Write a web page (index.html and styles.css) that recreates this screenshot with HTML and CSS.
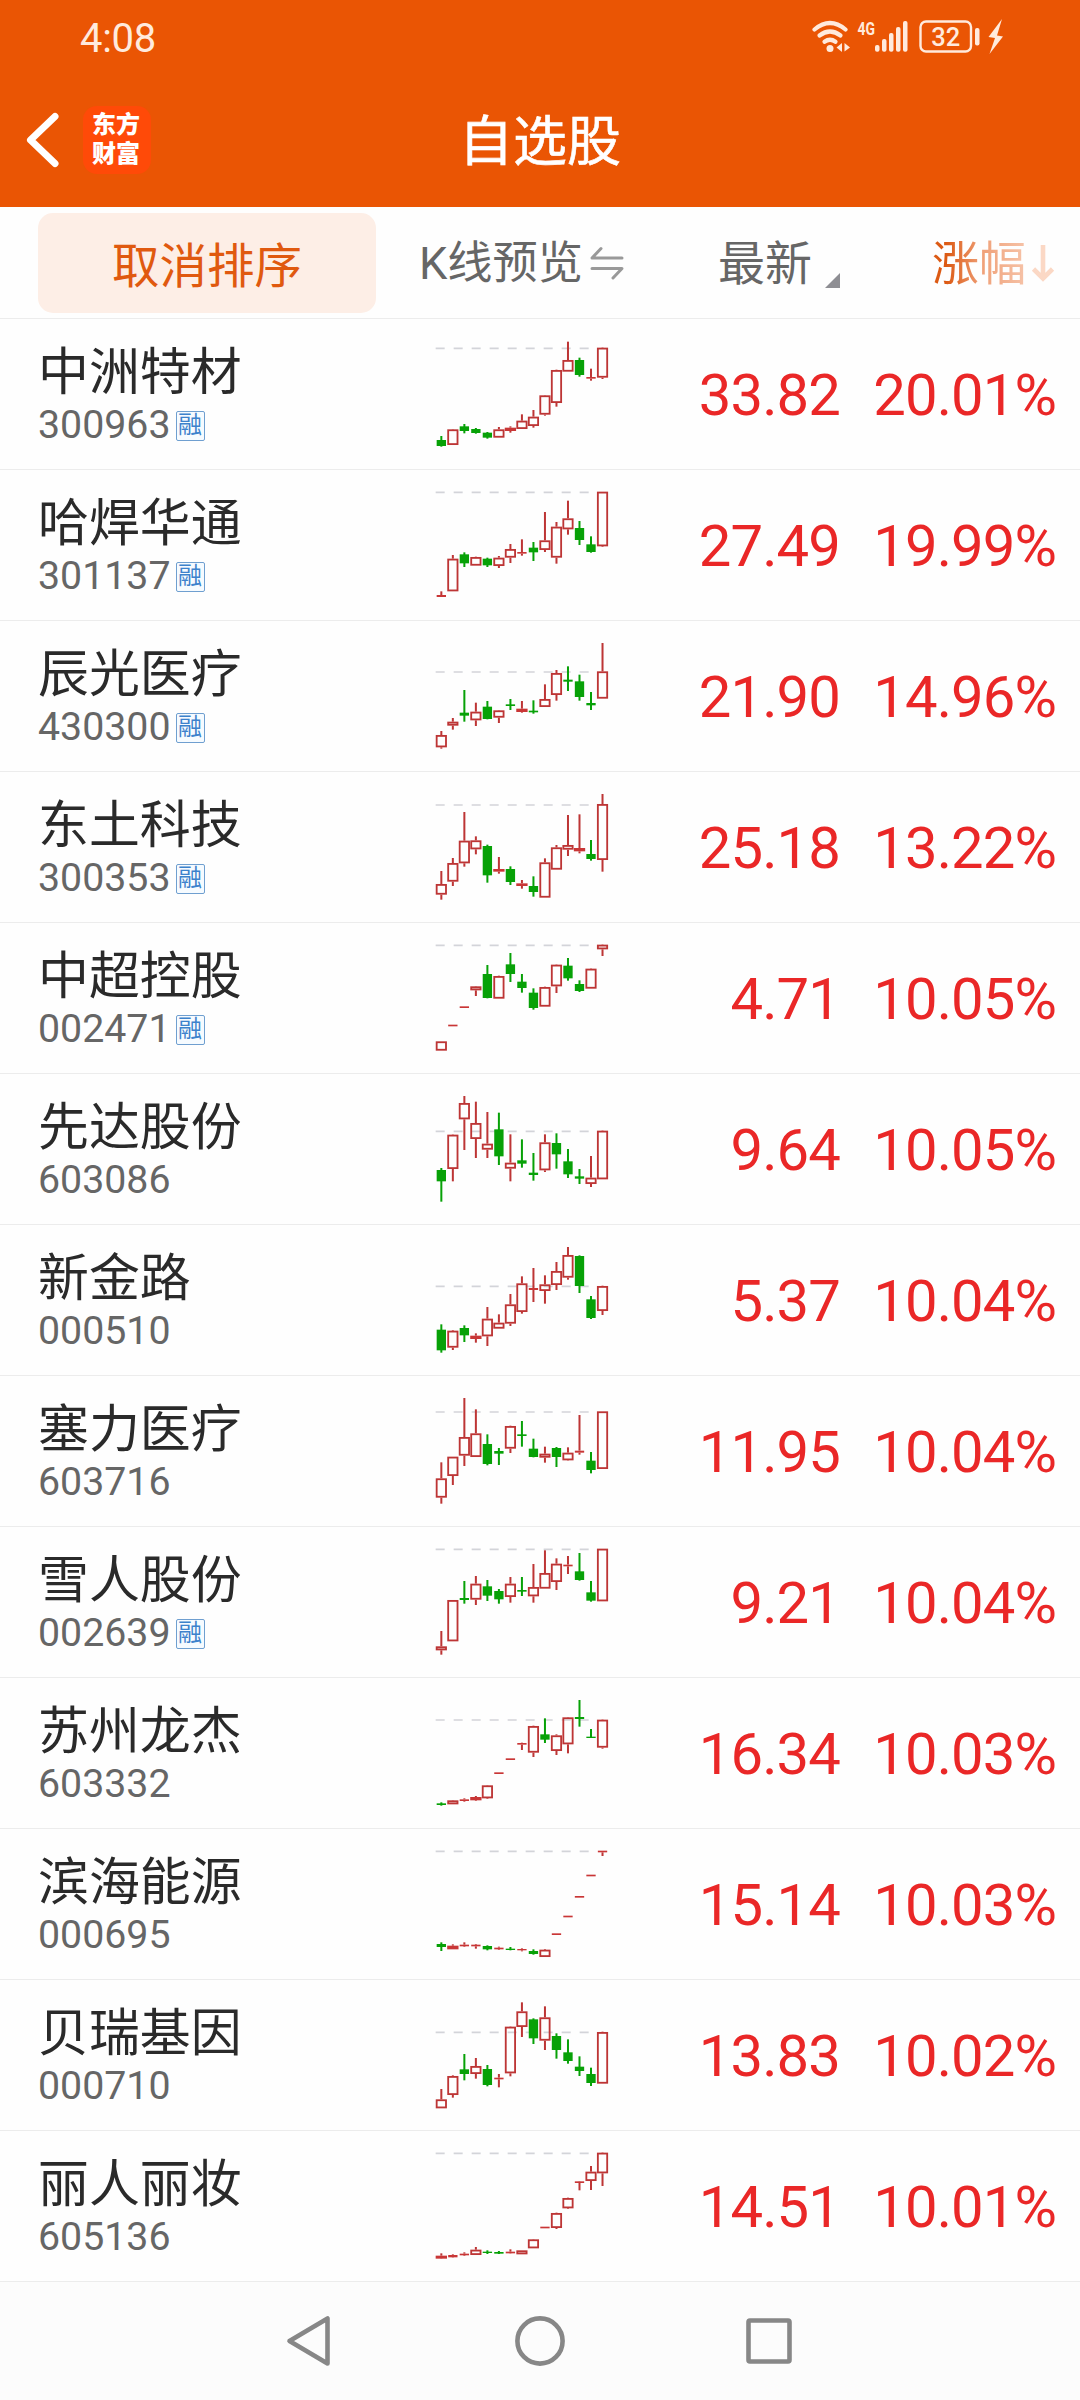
FILE: index.html
```html
<!DOCTYPE html>
<html lang="zh-CN">
<head>
<meta charset="utf-8">
<title>自选股</title>
<link rel="stylesheet" href="styles.css">
</head>
<body>
<header class="top">
  <div class="status">
    <span class="clock">4:08</span>
    <svg class="status-icons" width="194" height="40" viewBox="811 17 194 40" fill="none" stroke="#ffeadd">
      <g stroke-width="4.2" stroke-linecap="round">
        <path d="M814.500 29.500Q830 16.500 845.500 29.500"/>
        <path d="M819.500 35.500Q830 27.500 840.500 35.500"/>
        <path d="M824.500 41.700Q830 37.800 835.500 41.700"/>
      </g>
      <g fill="#ffeadd" stroke="none">
        <circle cx="830" cy="48.500" r="3.500"/>
        <path d="M842 43v9l-5.500-4.500zM844.500 43l5.500 4.500-5.500 4z"/>
        <text class="net" x="857.500" y="35" textLength="17.500" lengthAdjust="spacingAndGlyphs">4G</text>
        <rect x="875" y="45" width="4.500" height="6.800" rx="2"/>
        <rect x="882" y="39" width="4.500" height="12.800" rx="2"/>
        <rect x="889" y="33" width="4.500" height="18.800" rx="2"/>
        <rect x="896" y="27" width="4.500" height="24.800" rx="2"/>
        <rect x="903" y="21" width="4.500" height="30.800" rx="2"/>
        <text class="charge" x="945.700" y="46.300" text-anchor="middle">32</text>
        <rect x="975" y="28" width="4.500" height="17.500" rx="2"/>
        <path d="M1002 19l-13.500 18 6.500 1-5.500 16 13.500-17.500-6-1z"/>
      </g>
      <rect x="920.500" y="21.500" width="50.500" height="30" rx="5.500" stroke-width="2.400"/>
    </svg>
  </div>
  <div class="titlebar">
    <svg class="back" width="36" height="60" viewBox="0 0 36 60"><path d="M30 6.500L5.500 30 30 53.500" fill="none" stroke="#fff" stroke-width="7" stroke-linecap="round" stroke-linejoin="round"/></svg>
    <div class="logo">东方<br>财富</div>
    <h1 class="title">自选股</h1>
  </div>
</header>

<div class="columns">
  <button class="cancel">取消排序</button>
  <div class="col-k"><span>K线预览</span>
    <svg width="34" height="34" viewBox="0 0 34 34" fill="none" stroke="#999" stroke-width="3" stroke-linecap="round" stroke-linejoin="round"><path d="M32 12H2L11 2.500M2 22.500H32L23 32"/></svg>
  </div>
  <div class="col-price"><span>最新</span><i class="corner"></i></div>
  <div class="col-change"><span>涨幅</span>
    <svg width="24" height="38" viewBox="0 0 24 38" fill="none" stroke="#fbd8c5" stroke-width="4.600"><path d="M12 1V34M2.500 25L12 34.500 21.500 25"/></svg>
  </div>
</div>

<main class="list" id="list"></main>

<nav class="nav">
  <svg width="510" height="56" viewBox="285 2313 510 56" fill="none" stroke="#878787" stroke-width="4.600" stroke-linejoin="round">
    <path d="M289.500 2341L327.500 2318.500V2363.500Z"/>
    <circle cx="540" cy="2341" r="22.600"/>
    <rect x="748.500" y="2320.500" width="41" height="41" rx="1.500"/>
  </svg>
</nav>
<script src="app.js"></script>
</body>
</html>
```
FILE: styles.css
```css
* { box-sizing: border-box; }
body {
  margin: 0;
  width: 1080px;
  background: #fefefe;
  color: #2a2a2a;
  font-family: Roboto, "Noto Sans CJK SC", sans-serif;
}
svg { display: block; flex: none; }

.top { height: 207px; background: #ea5504; }
.status {
  display: flex;
  justify-content: space-between;
  align-items: center;
  height: 76px;
  padding: 0 75px 0 80px;
  color: #ffeadd;
}
.clock { padding-top: 2px; font-size: 40px; letter-spacing: -0.3px; line-height: 76px; }
.status-icons { margin-bottom: 2px; }
.net { font-size: 19px; font-weight: 700; }
.charge { font-size: 25.500px; font-weight: 500; }

.titlebar {
  display: grid;
  grid-template-columns: 36px 68px 1fr 155px;
  column-gap: 22px;
  align-items: center;
  height: 128px;
  padding: 0 0 0 25px;
}
.logo {
  width: 68px;
  height: 68px;
  padding: 5px 2px 0 0;
  border-radius: 14px;
  background: #ff4a08;
  color: #fff;
  font-size: 24px;
  font-weight: 900;
  line-height: 29px;
  text-align: center;
}
.title {
  margin: 0;
  padding-top: 6px;
  padding-left: 4px;
  color: #fff;
  font-size: 54px;
  font-weight: 400;
  -webkit-text-stroke: 0.6px #fff;
  line-height: 76px;
  text-align: center;
}

.columns {
  display: grid;
  grid-template-columns: 338px 245px 187px 1fr;
  align-items: center;
  height: 112px;
  padding: 0 25px 0 38px;
  border-bottom: 1px solid #ececec;
  color: #666;
  line-height: 64px;
}
.cancel {
  height: 100px;
  border: 0;
  padding: 0;
  border-radius: 15px;
  background: #fdeee6;
  color: #e0590f;
  font-family: inherit;
  font-size: 47.500px;
}
.columns span { padding-top: 2px; }
.col-k { display: flex; align-items: center; gap: 7px; padding-left: 43px; font-size: 45.200px; white-space: nowrap; }
.col-price { display: flex; justify-content: flex-end; align-items: center; gap: 13px; margin-right: -32px; font-size: 47px; }
.corner {
  width: 15px;
  height: 15px;
  margin-top: 36px;
  background: #8e8e93;
  clip-path: polygon(100% 0, 100% 100%, 0 100%);
}
.col-change { display: flex; justify-content: flex-end; align-items: center; gap: 5px; font-size: 47px; }
.col-change span {
  background: linear-gradient(90deg, #dc5a14 15%, #f0a27a 55%, #f6c3a8 100%);
  -webkit-background-clip: text;
  background-clip: text;
  color: transparent;
}

.row {
  display: grid;
  grid-template-columns: 382px 200px 220px 1fr;
  height: 151px;
  padding: 0 24px 0 38px;
  border-bottom: 1px solid #ececec;
}
.name { padding-top: 24px; font-size: 50.900px; line-height: 60px; white-space: nowrap; }
.code { display: flex; align-items: center; height: 43px; color: #666; font-size: 39.300px; }
.margin {
  width: 29px;
  height: 30px;
  margin: 2px 0 0 5px;
  border: 1.500px solid #6f9fd0;
  border-radius: 2px;
  background: #f6fbff;
  color: #3d82cc;
  font-size: 24px;
  line-height: 26px;
  text-align: center;
}
.num { padding-top: 1px; color: #ea2727; font-size: 58px; letter-spacing: -0.9px; line-height: 150px; text-align: right; }

.up { fill: none; stroke: #bd3535; stroke-width: 5.500; }
.up.solid { fill: #c93636; stroke: none; }
.down { fill: #07a107; }
.wick-up { fill: #bd3535; }
.limit { stroke: #d3d4d9; stroke-width: 5; stroke-dasharray: 27 27; }

.nav { display: flex; justify-content: center; align-items: center; height: 118px; background: #fcfcfc; }
```
FILE: app.js
```js
// name, code, margin flag, price, change, chart top, limit line, candles
// candle: direction, high, body top, body bottom, low (3 units per pixel)
const stocks = [
  ["中洲特材", "300963", 1, "33.82", "20.01%", -3, 85,
    "g 348 360 378 380,r 327 328 375 375,g 312 319 333 340,g 324 327 339 341,g 336 338 353 356,r 321 328 353 353,r 319 323 333 338,r 283 302 327 327,r 270 290 318 323,r 225 226 284 287,r 149 150 249 260,r 65 120 155 155,g 113 120 165 170,r 146 171 176 182,r 82 83 173 177"],
  ["哈焊华通", "301137", 1, "27.49", "19.99%", 450, 517,
    "r 814 825 831 831,r 705 716 814 814,g 697 703 730 741,r 710 711 737 737,g 713 716 736 741,r 708 713 738 744,r 672 687 713 729,r 658 696 701 707,g 666 683 697 723,r 576 661 690 696,r 606 620 713 731,r 542 595 628 644,g 603 624 660 675,g 649 673 696 698,r 515 515 679 681"],
  ["辰光医疗", "430300", 1, "21.90", "14.96%", 3, 156,
    "r 333 345 382 386,r 294 305 317 329,g 210 278 287 305,r 248 275 301 318,g 243 260 297 298,r 270 271 293 309,g 237 253 258 270,r 243 266 276 278,g 241 272 277 281,r 193 237 261 261,r 150 159 225 242,g 139 179 185 213,g 164 184 231 242,g 216 249 256 270,r 69 154 236 236"],
  ["东土科技", "300353", 1, "25.18", "13.22%", 456, 555,
    "r 753 792 824 839,r 714 729 785 798,r 576 662 730 740,r 649 661 688 703,g 674 678 766 788,r 711 747 755 761,g 739 747 786 795,r 780 790 798 806,g 769 798 816 830,r 715 727 833 833,r 675 682 749 749,r 585 675 689 708,r 583 684 694 700,g 660 702 717 722,r 522 552 720 755"],
  ["中超控股", "002471", 1, "4.71", "10.05%", 9, 76,
    "r 364 364 392 392,r 314 314 319 319,r 259 259 264 264,r 198 199 211 228,g 135 162 234 235,r 167 168 236 236,g 99 133 162 186,g 162 185 204 218,g 205 218 264 269,r 200 201 260 260,r 133 134 199 219,g 114 137 175 182,g 181 192 213 216,r 145 146 206 206,r 73 74 88 108"],
  ["先达股份", "603086", 0, "9.64", "10.05%", 462, 634,
    "g 744 750 784 845,r 643 644 747 784,r 528 549 598 690,r 545 609 657 714,r 576 671 689 714,g 578 628 709 735,r 643 728 746 784,g 658 721 731 743,g 699 758 765 782,r 643 667 751 756,g 640 669 703 746,g 687 724 763 774,g 747 769 776 792,r 708 773 792 801,r 631 632 778 778"],
  ["新金路", "000510", 0, "5.37", "10.04%", 15, 199,
    "g 313 329 391 398,r 330 332 383 390,g 316 324 346 366,r 340 347 357 368,r 261 296 349 378,r 283 308 326 326,r 222 253 311 318,r 169 190 276 281,r 144 204 210 246,r 166 193 213 251,r 126 153 195 210,r 81 105 173 179,g 106 108 198 219,g 228 238 294 297,r 197 198 273 285"],
  ["塞力医疗", "603716", 0, "11.95", "10.04%", 468, 576,
    "r 727 775 833 851,r 710 710 768 795,r 534 651 707 738,r 568 640 711 711,g 643 672 732 736,g 684 693 701 735,r 617 618 686 699,g 603 643 648 680,g 656 686 711 712,r 680 701 713 728,g 681 684 711 741,r 682 698 721 722,r 585 692 698 704,g 696 722 750 760,r 574 574 747 747"],
  ["雪人股份", "002639", 1, "9.21", "10.04%", 21, 88,
    "r 333 379 391 404,r 240 240 364 364,g 183 234 240 251,r 168 191 239 255,g 180 199 227 243,g 207 213 238 251,r 171 191 231 248,g 171 210 215 228,r 132 201 229 248,r 91 159 206 206,r 115 131 186 210,r 108 134 139 162,g 99 154 180 182,g 183 217 242 245,r 86 86 244 244"],
  ["苏州龙杰", "603332", 0, "16.34", "10.03%", 474, 600,
    "g 847 850 855 857,r 840 841 853 853,r 835 838 843 845,r 828 831 841 843,r 795 796 835 837,r 757 757 762 762,r 715 715 720 720,r 668 669 674 690,r 617 618 698 711,g 595 643 659 669,r 643 646 693 705,r 591 592 673 700,g 540 591 597 620,g 627 650 654 654,r 598 599 683 686"],
  ["滨海能源", "000695", 0, "15.14", "10.03%", 27, 94,
    "g 367 372 381 393,r 373 377 388 388,r 367 374 379 381,r 372 374 379 386,g 376 378 388 391,r 380 383 388 390,g 381 386 390 391,r 385 387 391 394,g 388 393 402 404,r 387 389 411 411,r 340 340 345 345,r 287 287 292 292,r 228 228 233 233,r 164 164 169 169,r 92 92 97 108"],
  ["贝瑞基因", "000710", 0, "13.83", "10.02%", 480, 637,
    "r 807 838 865 865,r 766 768 825 833,g 702 748 762 781,r 714 738 762 776,g 735 747 795 799,r 762 773 778 802,r 619 620 760 769,r 547 574 621 651,g 595 598 655 672,r 559 592 662 690,g 640 648 690 716,g 658 697 723 731,g 709 740 753 768,g 743 762 789 798,r 635 636 791 791"],
  ["丽人丽妆", "605136", 0, "14.51", "10.01%", 33, 100,
    "r 400 407 416 417,r 403 405 412 413,r 397 401 406 408,r 381 389 405 405,g 391 395 399 402,g 393 396 401 402,r 388 395 400 401,r 391 391 403 403,r 357 358 385 385,r 320 320 325 325,r 278 279 324 327,r 233 234 265 267,r 183 184 189 211,r 138 155 183 210,r 97 98 160 198"]
];

function candle(text, i) {
  const parts = text.split(" ");
  const [high, top, bottom, low] = parts.slice(1).map(Number);
  const x = 64 + 34.54 * i;
  const wick = (a, b, cls) => b > a ? `<rect class="${cls}" x="${x - 3}" y="${a}" width="6" height="${b - a}"/>` : "";
  if (parts[0] === "g") {
    return wick(high, low, "down") + `<rect class="down" x="${x - 14}" y="${top}" width="28" height="${bottom - top}"/>`;
  }
  const h = bottom - top;
  const body = h < 12
    ? `<rect class="up solid" x="${x - (h > 7 ? 17 : 14)}" y="${top}" width="${h > 7 ? 34 : 28}" height="${h}"/>`
    : `<rect class="up" x="${x - 14}" y="${top + 2.7}" width="28" height="${h - 5.4}"/>`;
  return wick(high, top, "wick-up") + wick(bottom, low, "wick-up") + body;
}

document.getElementById("list").innerHTML = stocks.map(([name, code, margin, price, change, top, limit, candles]) => `
  <section class="row">
    <div>
      <div class="name">${name}</div>
      <div class="code">${code}${margin ? '<span class="margin">融</span>' : ""}</div>
    </div>
    <svg width="200" height="150" viewBox="0 ${top} 600 450">
      <path class="limit" d="M47 ${limit}H510"/>
      ${candles.split(",").map(candle).join("")}
    </svg>
    <div class="num">${price}</div>
    <div class="num">${change}</div>
  </section>`).join("");
```
